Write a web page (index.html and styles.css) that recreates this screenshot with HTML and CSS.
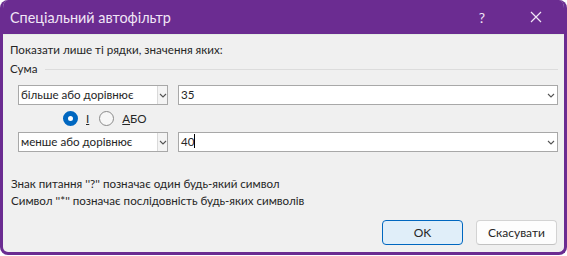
FILE: index.html
```html
<!DOCTYPE html>
<html>
<head>
<title>Спеціальний автофільтр</title>
<link rel="stylesheet" href="styles.css">
</head>
<body>

<div class="window">
  <div class="titlebar">
    <span class="title">Спеціальний автофільтр</span>
    <span class="tb-btn help">?</span>
    <span class="tb-btn close">
      <svg width="12" height="12" viewBox="0 0 12 12"><path d="M1 1 L11 11 M11 1 L1 11" stroke="#f1e6f6" stroke-width="1.2" fill="none"/></svg>
    </span>
  </div>

  <div class="content">
    <div class="prompt">Показати лише ті рядки, значення яких:</div>
    <div class="group-label"><span>Сума</span><span class="rule"></span></div>

    <div class="criteria">
      <div class="row">
        <div class="select">
          <span class="select-text">більше або дорівнює</span>
          <span class="select-btn"><svg width="8" height="5" viewBox="0 0 8 5"><path d="M1 1 L4 4 L7 1" stroke="#555" stroke-width="1.1" fill="none"/></svg></span>
        </div>
        <div class="combo">
          <span class="combo-text">35</span>
          <span class="combo-btn"><svg width="8" height="5" viewBox="0 0 8 5"><path d="M1 1 L4 4 L7 1" stroke="#555" stroke-width="1.1" fill="none"/></svg></span>
        </div>
      </div>

      <div class="logic">
        <span class="radio checked"></span><span class="radio-label"><u>І</u></span>
        <span class="radio"></span><span class="radio-label"><u>А</u>БО</span>
      </div>

      <div class="row">
        <div class="select">
          <span class="select-text">менше або дорівнює</span>
          <span class="select-btn"><svg width="8" height="5" viewBox="0 0 8 5"><path d="M1 1 L4 4 L7 1" stroke="#555" stroke-width="1.1" fill="none"/></svg></span>
        </div>
        <div class="combo">
          <span class="combo-text">40<span class="caret"></span></span>
          <span class="combo-btn"><svg width="8" height="5" viewBox="0 0 8 5"><path d="M1 1 L4 4 L7 1" stroke="#555" stroke-width="1.1" fill="none"/></svg></span>
        </div>
      </div>
    </div>

    <div class="hints">
      <div>Знак питання ''?'' позначає один будь-який символ</div>
      <div>Символ ''*'' позначає послідовність будь-яких символів</div>
    </div>

    <div class="actions">
      <button class="btn primary">OK</button>
      <button class="btn">Скасувати</button>
    </div>
  </div>
</div>

</body>
</html>
```

FILE: styles.css
```css
body {
  margin: 0;
  background-color: #ffffff;
  font-family: Lato, "Open Sans", sans-serif;
  font-size: 11.6px;
  color: #262626;
}
.window {
  box-sizing: border-box;
  width: 567px;
  height: 255px;
  border: 3px solid #6b2c91;
  border-top: 0;
  border-radius: 8px;
  overflow: hidden;
  background-color: #f0f0f0;
}
.titlebar {
  display: flex;
  align-items: center;
  height: 34px;
  background-color: #6b2c91;
  color: #f1e6f6;
}
.title {
  flex: 1;
  padding-left: 7px;
  font-size: 14.4px;
}
.tb-btn {
  display: flex;
  align-items: center;
  justify-content: center;
  width: 46px;
  font-size: 14px;
}
.help {
  margin-right: 8px;
}
.close {
  margin-right: 5px;
}
.content {
  border-top: 1px solid #e4ede4;
  padding: 0 6px 0 7px;
}
.prompt {
  margin-top: 7px;
  line-height: 16px;
}
.group-label {
  display: flex;
  align-items: center;
  margin-top: 3px;
  line-height: 16px;
}
.rule {
  flex: 1;
  height: 1px;
  margin-left: 8px;
  background-color: #dcdcdc;
}
.criteria {
  margin-left: 8px;
}
.row {
  display: flex;
  gap: 10px;
  height: 20px;
}
.row:first-child {
  margin-top: 8px;
}
.select {
  box-sizing: border-box;
  display: flex;
  width: 150px;
  border: 1px solid #a8a8a8;
  background-color: #ffffff;
}
.select-text {
  flex: 1;
  padding-left: 2px;
  line-height: 18px;
}
.select-btn {
  display: flex;
  align-items: center;
  justify-content: center;
  width: 9px;
  border-left: 1px solid #dadada;
  background-color: #f4f4f4;
}
.combo {
  box-sizing: border-box;
  display: flex;
  flex: 1;
  border: 1px solid #a8a8a8;
  background-color: #ffffff;
}
.combo-text {
  flex: 1;
  padding-left: 2px;
  line-height: 18px;
}
.combo-btn {
  display: flex;
  align-items: center;
  justify-content: center;
  width: 12px;
}
.caret {
  display: inline-block;
  width: 1px;
  height: 14px;
  background-color: #000;
  vertical-align: -2px;
}
.logic {
  display: flex;
  align-items: center;
  height: 16px;
  margin: 5px 0 6px 45px;
}
.radio {
  box-sizing: border-box;
  width: 15px;
  height: 15px;
  border: 1px solid #8a8a8a;
  border-radius: 50%;
  background-color: #f7f7f7;
}
.radio.checked {
  border: 5px solid #0067c0;
  background-color: #ffffff;
}
.radio-label {
  margin: 0 10px 0 8px;
}
.hints {
  margin-top: 23px;
  margin-left: 1px;
  line-height: 17px;
}
.actions {
  display: flex;
  justify-content: flex-end;
  gap: 13px;
  margin-top: 11px;
  padding-right: 1px;
}
.btn {
  width: 81px;
  height: 25px;
  font-family: Lato, "Open Sans", sans-serif;
  font-size: 12px;
  color: #262626;
  border: 1px solid #d3d3d3;
  border-bottom-color: #c2c2c2;
  border-radius: 4px;
  background-color: #fdfdfd;
}
.btn.primary {
  border: 1px solid #0067c0;
  background-color: #e0eef9;
}
```
